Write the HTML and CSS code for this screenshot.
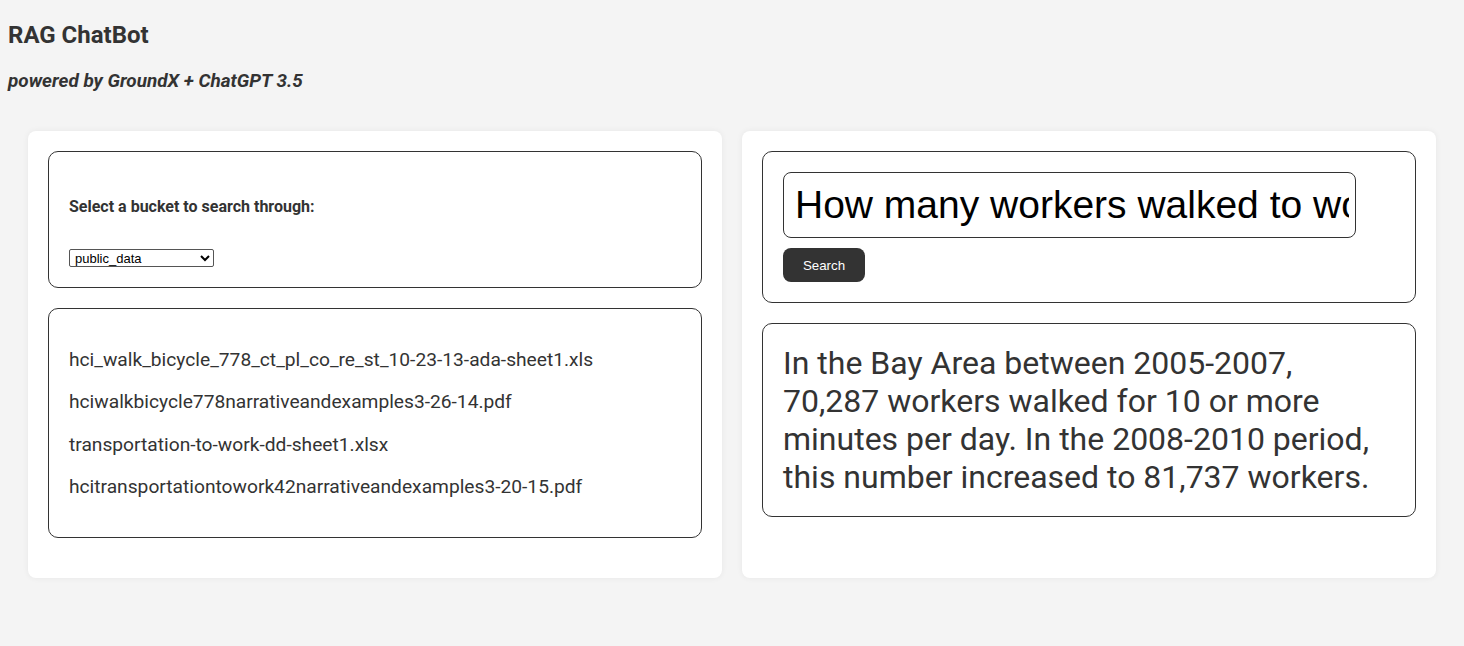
FILE: index.html
```html
<!DOCTYPE html>
<html>
<head>
<meta charset="utf-8">
<title>RAG ChatBot</title>
<link rel="stylesheet" href="styles.css">
</head>
<body>
<header class="header">
  <h1 class="title">RAG ChatBot</h1>
  <h2 class="subtitle">powered by GroundX + ChatGPT 3.5</h2>
</header>
<main class="columns">
  <section class="card">
    <div class="box bucket-box">
      <label class="bucket-label" for="bucket">Select a bucket to search through:</label>
      <select id="bucket" class="bucket-select">
        <option>public_data</option>
      </select>
    </div>
    <div class="box files-box">
      <p class="file">hci_walk_bicycle_778_ct_pl_co_re_st_10-23-13-ada-sheet1.xls</p>
      <p class="file">hciwalkbicycle778narrativeandexamples3-26-14.pdf</p>
      <p class="file">transportation-to-work-dd-sheet1.xlsx</p>
      <p class="file">hcitransportationtowork42narrativeandexamples3-20-15.pdf</p>
    </div>
  </section>
  <section class="card">
    <div class="box search-box">
      <input class="query" type="text" value="How many workers walked to work in the Bay Area?">
      <button class="search-btn">Search</button>
    </div>
    <div class="box answer-box">
      <p class="answer">In the Bay Area between 2005-2007, 70,287 workers walked for 10 or more minutes per day. In the 2008-2010 period, this number increased to 81,737 workers.</p>
    </div>
  </section>
</main>
</body>
</html>
```

FILE: styles.css
```css
* { box-sizing: border-box; }
html, body { height: 100%; }
body {
  margin: 0;
  padding: 8px;
  background: #f4f4f4;
  font-family: Roboto, "Liberation Sans", Arial, sans-serif;
  color: #333;
}
.header { display: flex; flex-direction: column; }
.title {
  margin: 13px 0 0;
  font-size: 24px;
  line-height: 28px;
  font-weight: 700;
}
.subtitle {
  margin: 21px 0 0;
  font-size: 18.9px;
  line-height: 22px;
  font-style: italic;
  font-weight: 700;
}
.columns {
  display: grid;
  grid-template-columns: 1fr 1fr;
  gap: 20px;
  margin: 39px 20px 0;
}
.card {
  background: #fff;
  border-radius: 8px;
  box-shadow: 0 0 6px rgba(0,0,0,0.06);
  padding: 20px 20px 40px;
  display: flex;
  flex-direction: column;
  gap: 20px;
  height: 447px;
}
.box {
  border: 1px solid #333;
  border-radius: 10px;
  padding: 20px;
  background: #fff;
}
.bucket-box {
  display: flex;
  flex-direction: column;
  align-items: flex-start;
  padding-top: 45px;
}
.bucket-label {
  font-size: 16px;
  line-height: 19px;
  font-weight: 700;
  margin-bottom: 33px;
}
.bucket-select {
  width: 145px;
  height: 18px;
  font-family: "Liberation Sans", Arial, sans-serif;
  font-size: 13px;
  color: #000;
  border: 1px solid #555;
  border-radius: 2px;
  background: #fff;
  padding: 0 1px;
}
.file {
  margin: 19.2px 0;
  font-size: 19.2px;
  line-height: 23px;
  font-weight: 400;
}
.search-box {
  display: flex;
  flex-direction: column;
  align-items: flex-start;
  gap: 10px;
}
.query {
  width: 573px;
  height: 66px;
  padding: 10px 6px 10px 11px;
  font-family: "Liberation Sans", Arial, sans-serif;
  font-size: 39px;
  color: #000;
  border: 1px solid #333;
  border-radius: 8px;
  background: #fff;
  outline: none;
}
.search-btn {
  height: 34px;
  width: 82px;
  padding: 0;
  background: #333;
  color: #fff;
  border: none;
  border-radius: 8px;
  font-family: "Liberation Sans", Arial, sans-serif;
  font-size: 13.33px;
  font-weight: 400;
}
.answer {
  margin: 0;
  font-size: 32px;
  line-height: 38px;
  color: #333;
}
```
